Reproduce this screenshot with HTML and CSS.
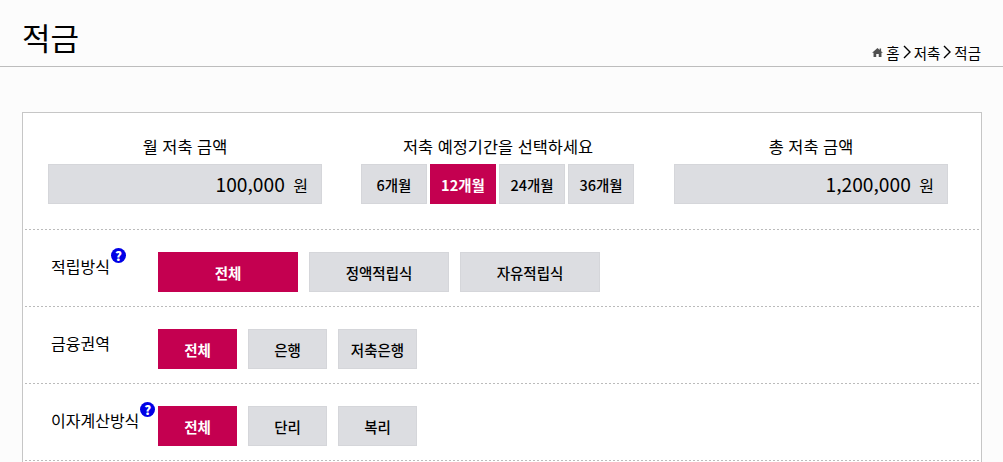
FILE: index.html
```html
<!DOCTYPE html>
<html lang="ko">
  <head>
    <meta charset="utf-8">
    <title>적금</title>
    <link rel="stylesheet" href="styles.css">
  </head>
  <body>
    <header class="page-head">
      <h1>적금</h1>
      <div class="crumbs">
        <svg class="home" viewBox="0 0 12 10" width="11" height="9">
          <path d="M6 0 L8.4 2.1 L8.4 0.6 L10 0.6 L10 3.5 L12 5.2 L10.4 5.2 L10.4 10 L7.4 10 L7.4 6.6 L4.6 6.6 L4.6 10 L1.6 10 L1.6 5.2 L0 5.2 Z" fill="#505050"/>
        </svg>
        <span>홈</span>
        <svg class="sep" viewBox="0 0 8 14" width="8" height="14"><path d="M1 1 L7 7 L1 13" fill="none" stroke="#000" stroke-width="1.4"/></svg>
        <span>저축</span>
        <svg class="sep" viewBox="0 0 8 14" width="8" height="14"><path d="M1 1 L7 7 L1 13" fill="none" stroke="#000" stroke-width="1.4"/></svg>
        <span>적금</span>
      </div>
    </header>

    <main class="panel">
      <section class="summary">
        <div class="summary-col">
          <h2>월 저축 금액</h2>
          <div class="amount"><b>100,000</b> 원</div>
        </div>
        <div class="summary-col">
          <h2>저축 예정기간을 선택하세요</h2>
          <div class="periods">
            <button class="btn">6개월</button>
            <button class="btn on">12개월</button>
            <button class="btn">24개월</button>
            <button class="btn">36개월</button>
          </div>
        </div>
        <div class="summary-col">
          <h2>총 저축 금액</h2>
          <div class="amount"><b>1,200,000</b> 원</div>
        </div>
      </section>

      <section class="row">
        <div class="label">적립방식<span class="help">?</span></div>
        <div class="options wide">
          <button class="btn on">전체</button>
          <button class="btn">정액적립식</button>
          <button class="btn">자유적립식</button>
        </div>
      </section>

      <section class="row">
        <div class="label">금융권역</div>
        <div class="options">
          <button class="btn on">전체</button>
          <button class="btn">은행</button>
          <button class="btn">저축은행</button>
        </div>
      </section>

      <section class="row">
        <div class="label">이자계산방식<span class="help">?</span></div>
        <div class="options">
          <button class="btn on">전체</button>
          <button class="btn">단리</button>
          <button class="btn">복리</button>
        </div>
      </section>
    </main>
  </body>
</html>
```

FILE: styles.css
```css
html, body {
  height: 462px;
  overflow: hidden;
}
body {
  margin: 0;
  background: #fcfcfc;
  color: #000;
  font-family: "Noto Sans CJK KR", "Noto Sans", sans-serif;
}
.page-head {
  box-sizing: border-box;
  border-bottom: 1px solid #bdbdbd;
  height: 67px;
  padding: 0 22px;
  display: flex;
  justify-content: space-between;
  align-items: flex-end;
}
h1 {
  margin: 0 0 6px;
  font-size: 31px;
  line-height: 46px;
  font-weight: 400;
}
.crumbs {
  display: flex;
  align-items: center;
  gap: 3px;
  height: 18px;
  margin-bottom: 5px;
  font-size: 14.5px;
}
.panel {
  margin: 45px 21px 0 22px;
  min-height: 400px;
  background: #fff;
  border: 1px solid #c6c6c6;
  padding: 0 2px;
}
.summary,
.row {
  box-sizing: border-box;
  display: flex;
  background: repeating-linear-gradient(90deg, #bbb 0 2px, transparent 2px 4px) left bottom / 100% 1px no-repeat;
}
.summary {
  height: 117px;
  justify-content: space-between;
  padding: 22px 31px 0 23px;
}
.summary-col {
  width: 274px;
}
h2 {
  margin: 0 0 7px;
  text-align: center;
  font-size: 16.4px;
  line-height: 22px;
  font-weight: 400;
}
.amount {
  height: 40px;
  box-sizing: border-box;
  background: #dcdde1;
  border: 1px solid #d5d6da;
  padding-right: 13px;
  text-align: right;
  font-size: 16px;
  line-height: 38px;
}
.amount b {
  font-size: 19.2px;
  font-weight: 400;
  margin-right: 4px;
}
.btn {
  height: 40px;
  padding: 0;
  background: #dcdde1;
  border: 1px solid #d5d6da;
  color: #000;
  font-family: inherit;
  font-size: 14.5px;
  font-weight: 500;
}
.btn.on {
  background: #c40050;
  border-color: #c40050;
  color: #fff;
  font-weight: 700;
}
.periods {
  display: flex;
  gap: 3px;
}
.periods .btn {
  width: 66px;
}
.row {
  height: 77px;
  align-items: flex-start;
  padding: 22px 0 0 26px;
}
.label {
  width: 107px;
  position: relative;
  padding-top: 3px;
  font-size: 16px;
  line-height: 22px;
}
.help {
  position: absolute;
  top: -4px;
  margin-left: 1px;
  width: 15px;
  height: 15px;
  border-radius: 50%;
  background: #0000e6;
  color: #fff;
  font-size: 13px;
  font-weight: 900;
  line-height: 15px;
  text-align: center;
}
.options {
  display: flex;
  gap: 11px;
}
.options .btn {
  width: 79px;
}
.options.wide .btn {
  width: 140px;
}
```
